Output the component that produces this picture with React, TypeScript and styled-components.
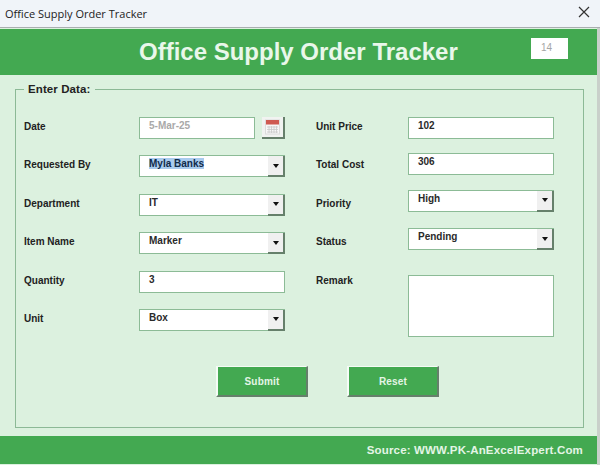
import React from "react";
import styled, { createGlobalStyle } from "styled-components";

const GlobalStyle = createGlobalStyle`
  html, body {
    margin: 0;
    padding: 0;
    height: 100%;
    background: #f1f5f9;
    font-family: "Liberation Sans", Arial, sans-serif;
    overflow: hidden;
  }
`;

const Win = styled.div`
  width: 600px;
  height: 465px;
  display: flex;
  flex-direction: column;
  overflow: hidden;
`;

const TitleBar = styled.div`
  height: 27px;
  flex: none;
  display: flex;
  align-items: center;
  justify-content: space-between;
  padding: 0 10px 0 5px;
  background: #f0f4f9;
  border-bottom: 1px solid #a9aeb0;
  font-family: "Open Sans", sans-serif;
  font-size: 11px;
  color: #222;
`;

const Close = styled.svg`
  width: 12px;
  height: 12px;
  margin-bottom: 3px;
  stroke: #333;
  stroke-width: 1.2;
  fill: none;
`;

const Content = styled.div`
  width: 597px;
  flex: 1;
  display: flex;
  flex-direction: column;
  background: #dcf1df;
  border-right: 3px solid #c9d0ca;
`;

const Header = styled.header`
  height: 46px;
  margin-top: 1px;
  flex: none;
  display: flex;
  align-items: center;
  justify-content: space-between;
  padding: 0 29px 0 139px;
  background: #43a951;
`;

const Title = styled.h1`
  margin: 0;
  font-size: 24px;
  font-weight: 700;
  color: #e9f7ea;
`;

const Counter = styled.div`
  width: 27px;
  height: 21px;
  margin-bottom: 7px;
  padding-left: 10px;
  background: #fff;
  font-size: 10px;
  line-height: 19px;
  color: #a5a5a5;
`;

const Frame = styled.fieldset`
  margin: 8px 13px 0 15px;
  height: 345px;
  box-sizing: border-box;
  padding: 0 0 0 8px;
  border: 1px solid #8cb996;
  min-inline-size: 0;
`;

const FrameTitle = styled.legend`
  margin-left: 0;
  padding: 0 5px 0 4px;
  font-size: 11.5px;
  font-weight: 700;
  letter-spacing: 0.1px;
  color: #222;
`;

const Columns = styled.div`
  display: flex;
  margin-top: 20px;
`;

const Column = styled.div<{ $width: number }>`
  width: ${(p) => p.$width}px;
  flex: none;
`;

const Row = styled.div`
  height: 38.4px;
  display: flex;
  align-items: flex-start;
`;

const Label = styled.div<{ $width: number }>`
  width: ${(p) => p.$width}px;
  flex: none;
  height: 22px;
  line-height: 24px;
  font-size: 10px;
  font-weight: 700;
  color: #222;
`;

const Field = styled.div<{ $width?: number; $height?: number; $top?: number; $muted?: boolean }>`
  position: relative;
  box-sizing: border-box;
  width: ${(p) => p.$width ?? 146}px;
  height: ${(p) => p.$height ?? 22}px;
  margin-top: ${(p) => p.$top ?? 2}px;
  padding-left: 9px;
  flex: none;
  background: #fff;
  border: 1px solid #8cbb96;
  font-size: 10px;
  font-weight: 700;
  line-height: 15px;
  color: ${(p) => (p.$muted ? "#a9a9a9" : "#2a2a2a")};
`;

const Selected = styled.span`
  background: #a9cbee;
  color: #102a4a;
`;

const Arrow = styled.div`
  position: absolute;
  top: 0;
  right: -1px;
  bottom: -1px;
  width: 17px;
  display: flex;
  align-items: center;
  justify-content: center;
  background: #f0f0f0;
  border-right: 2px solid #66806b;
  border-bottom: 2px solid #66806b;
  box-sizing: border-box;

  &::after {
    content: "";
    border-left: 3.5px solid transparent;
    border-right: 3.5px solid transparent;
    border-top: 4px solid #111;
  }
`;

const CalendarButton = styled.div`
  box-sizing: border-box;
  width: 23px;
  height: 22px;
  margin: 2px 0 0 7px;
  display: flex;
  align-items: center;
  justify-content: center;
  background: #f1f3f1;
  border-right: 2px solid #66806b;
  border-bottom: 2px solid #66806b;
`;

const Actions = styled.div`
  display: flex;
  gap: 39px;
  margin: 21px 0 0 192px;
`;

const ActionButton = styled.div`
  box-sizing: border-box;
  width: 92px;
  height: 31px;
  display: flex;
  align-items: center;
  justify-content: center;
  background: #43a951;
  border-top: 1px solid #f5fbf6;
  border-left: 2px solid #f5fbf6;
  border-right: 2px solid #667f6b;
  border-bottom: 2px solid #667f6b;
  font-size: 10px;
  font-weight: 700;
  letter-spacing: 0.2px;
  color: #e4f5e6;
`;

const Footer = styled.footer`
  height: 28px;
  margin-top: 8px;
  flex: none;
  display: flex;
  align-items: center;
  justify-content: flex-end;
  padding-right: 14px;
  background: #43a951;
  font-size: 11.5px;
  font-weight: 700;
  letter-spacing: 0.17px;
  color: #e4f5e6;
`;

const CalendarIcon = () => (
  <svg width="15" height="16" viewBox="0 0 15 16">
    <rect x="0.5" y="1" width="14" height="14" fill="#f7f7f7" stroke="#dcdcdc" />
    <rect x="1" y="1" width="13" height="4.5" fill="#cf5a52" />
    <path d="M2 8h11M2 10.5h11M2 13h11M4 7v7M6.5 7v7M9 7v7M11.5 7v7" stroke="#c9c9c9" strokeWidth="0.8" fill="none" />
  </svg>
);

const Select = ({ children, top }: { children: React.ReactNode; top?: number }) => (
  <Field $top={top}>
    {children}
    <Arrow />
  </Field>
);

export default function App() {
  return (
    <Win>
      <GlobalStyle />
      <TitleBar>
        Office Supply Order Tracker
        <Close viewBox="0 0 12 12">
          <path d="M1 1l10 10M11 1L1 11" />
        </Close>
      </TitleBar>
      <Content>
        <Header>
          <Title>Office Supply Order Tracker</Title>
          <Counter>14</Counter>
        </Header>
        <Frame>
          <FrameTitle>Enter Data:</FrameTitle>
          <Columns>
            <Column $width={292}>
              <Row>
                <Label $width={115}>Date</Label>
                <Field $width={116} $muted>5-Mar-25</Field>
                <CalendarButton>
                  <CalendarIcon />
                </CalendarButton>
              </Row>
              <Row>
                <Label $width={115}>Requested By</Label>
                <Select><Selected>Myla Banks</Selected></Select>
              </Row>
              <Row>
                <Label $width={115}>Department</Label>
                <Select>IT</Select>
              </Row>
              <Row>
                <Label $width={115}>Item Name</Label>
                <Select>Marker</Select>
              </Row>
              <Row>
                <Label $width={115}>Quantity</Label>
                <Field>3</Field>
              </Row>
              <Row>
                <Label $width={115}>Unit</Label>
                <Select>Box</Select>
              </Row>
            </Column>
            <Column $width={238}>
              <Row>
                <Label $width={92}>Unit Price</Label>
                <Field>102</Field>
              </Row>
              <Row>
                <Label $width={92}>Total Cost</Label>
                <Field $top={0}>306</Field>
              </Row>
              <Row>
                <Label $width={92}>Priority</Label>
                <Select top={-2}>High</Select>
              </Row>
              <Row>
                <Label $width={92}>Status</Label>
                <Select top={-2}>Pending</Select>
              </Row>
              <Row>
                <Label $width={92}>Remark</Label>
                <Field $height={62} $top={6} />
              </Row>
            </Column>
          </Columns>
          <Actions>
            <ActionButton>Submit</ActionButton>
            <ActionButton>Reset</ActionButton>
          </Actions>
        </Frame>
        <Footer>Source: WWW.PK-AnExcelExpert.Com</Footer>
      </Content>
    </Win>
  );
}
